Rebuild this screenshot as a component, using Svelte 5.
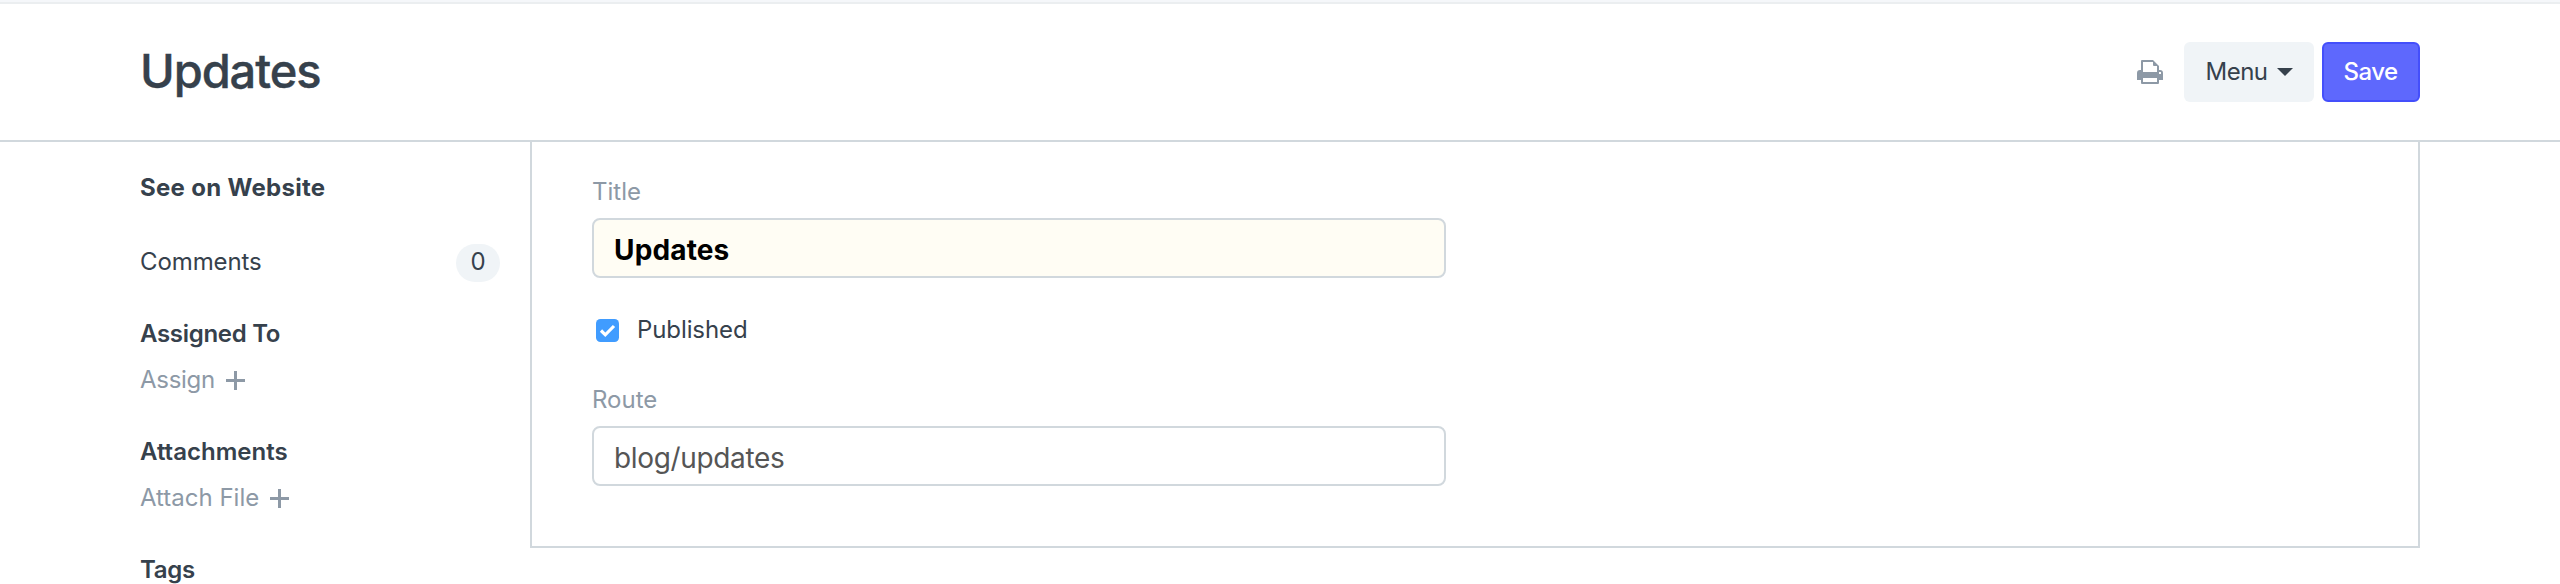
<script>
  const items = [
    { title: 'Assigned To', action: 'Assign', tight: true },
    { title: 'Attachments', action: 'Attach File', tight: false }
  ];
  let title = $state('Updates');
  let route = $state('blog/updates');
</script>

<div class="page">
  <div class="navline"></div>
  <header>
    <h1>Updates</h1>
    <div class="actions">
      <svg class="print" width="26" height="24" viewBox="0 0 26 24" fill="#8d99a6">
        <path fill-rule="evenodd" d="M5 0h11l6 6v4h1q3 0 3 3v7h-4v3q0 1-1 1H5q-1 0-1-1v-3H0v-7q0-3 3-3h1V1q0-1 1-1zM6 2v10h14V6h-3q-1 0-1-1V2zM6 18v4h14v-4zM22 12v2h2v-2z" />
      </svg>
      <button class="menu"><span>Menu</span><svg width="16" height="8" viewBox="0 0 16 8"><path d="M0 0h16L8 8z" fill="#36414c" /></svg></button>
      <button class="save">Save</button>
    </div>
  </header>
  <main>
    <aside>
      <div class="line bold">See on Website</div>
      <div class="line comments"><span>Comments</span><span class="badge">0</span></div>
      {#each items as item}
        <section>
          <div class="line medium" class:tight={item.tight}>{item.title}</div>
          <div class="line action" class:tight={item.tight}>
            <span>{item.action}</span>
            <svg width="19" height="19" viewBox="0 0 19 19"><path d="M9.5 0v19M0 9.5h19" stroke="#8d99a6" stroke-width="3" /></svg>
          </div>
        </section>
      {/each}
      <div class="line medium tight">Tags</div>
    </aside>
    <div class="panel">
      <label class="line" for="title">Title</label>
      <input id="title" class="required" bind:value={title} />
      <div class="check line">
        <svg width="23" height="23" viewBox="0 0 23 23"><rect width="23" height="23" rx="4.5" fill="#409cff" /><path d="M5 11.5l4.3 4.3L18 7" fill="none" stroke="#fff" stroke-width="3.2" /></svg>
        <span>Published</span>
      </div>
      <label class="line" for="route">Route</label>
      <input id="route" bind:value={route} />
    </div>
  </main>
</div>

<style>
  :global(body) { margin: 0; background: #fff; }
  .page {
    height: 584px;
    overflow: hidden;
    font-family: Inter, sans-serif;
    font-size: 24px;
    color: #36414c;
    background: #fff;
  }
  .page * { box-sizing: border-box; }
  .navline { height: 4px; background: #f5f7fa; border-bottom: 2px solid #ebeef0; }
  header {
    display: flex;
    justify-content: space-between;
    align-items: center;
    height: 138px;
    padding: 0 140px;
    border-bottom: 2px solid #d1d8dd;
  }
  h1 { margin: 0; padding-bottom: 2px; font-size: 47px; line-height: 60px; font-weight: 500; letter-spacing: -1.1px; -webkit-text-stroke: 0.4px #36414c; }
  .actions { display: flex; align-items: center; }
  .print { margin-right: 21px; }
  button {
    height: 60px;
    padding: 0 0 1px;
    display: flex;
    align-items: center;
    justify-content: center;
    border: 0;
    border-radius: 6px;
    font: inherit;
    color: inherit;
  }
  .menu { width: 130px; gap: 9px; letter-spacing: -0.5px; background: #f0f4f7; }
  .save { width: 98px; margin-left: 8px; padding-right: 1px; font-weight: 500; letter-spacing: -0.6px; color: #fff; background: #5e68fd; border: 2px solid #444ffb; }
  main { display: flex; padding: 0 140px; }
  aside { width: 390px; padding-top: 26px; padding-right: 30px; }
  .line { display: block; line-height: 40px; height: 40px; white-space: nowrap; }
  .bold { font-weight: 700; letter-spacing: 0.3px; }
  .medium { font-weight: 600; }
  .tight { letter-spacing: -0.3px; }
  .comments { display: flex; justify-content: space-between; margin: 34px 0 32px; letter-spacing: -0.1px; }
  .badge { width: 44px; height: 38px; margin-top: 2px; line-height: 36px; border-radius: 19px; background: #f0f4f7; text-align: center; }
  section { margin-bottom: 32px; }
  .action { display: flex; align-items: center; gap: 11px; margin-top: 6px; color: #8d99a6; }
  .panel {
    width: 1890px;
    height: 406px;
    padding: 30px 60px 0;
    border: 2px solid #d1d8dd;
    border-top: 0;
  }
  label { color: #8d99a6; }
  input {
    display: block;
    width: 854px;
    height: 60px;
    margin: 6px 0 0;
    padding: 4px 20px 0;
    border: 2px solid #d1d8dd;
    border-radius: 8px;
    background: #fff;
    font: 400 28px Inter, sans-serif;
    letter-spacing: -0.35px;
    color: #555;
    outline: 0;
  }
  .required { background: #fffdf4; font-weight: 700; letter-spacing: 0.15px; color: #000; }
  .check { display: flex; align-items: center; gap: 18px; margin: 32px 0 30px; padding-left: 4px; letter-spacing: -0.1px; }
</style>
